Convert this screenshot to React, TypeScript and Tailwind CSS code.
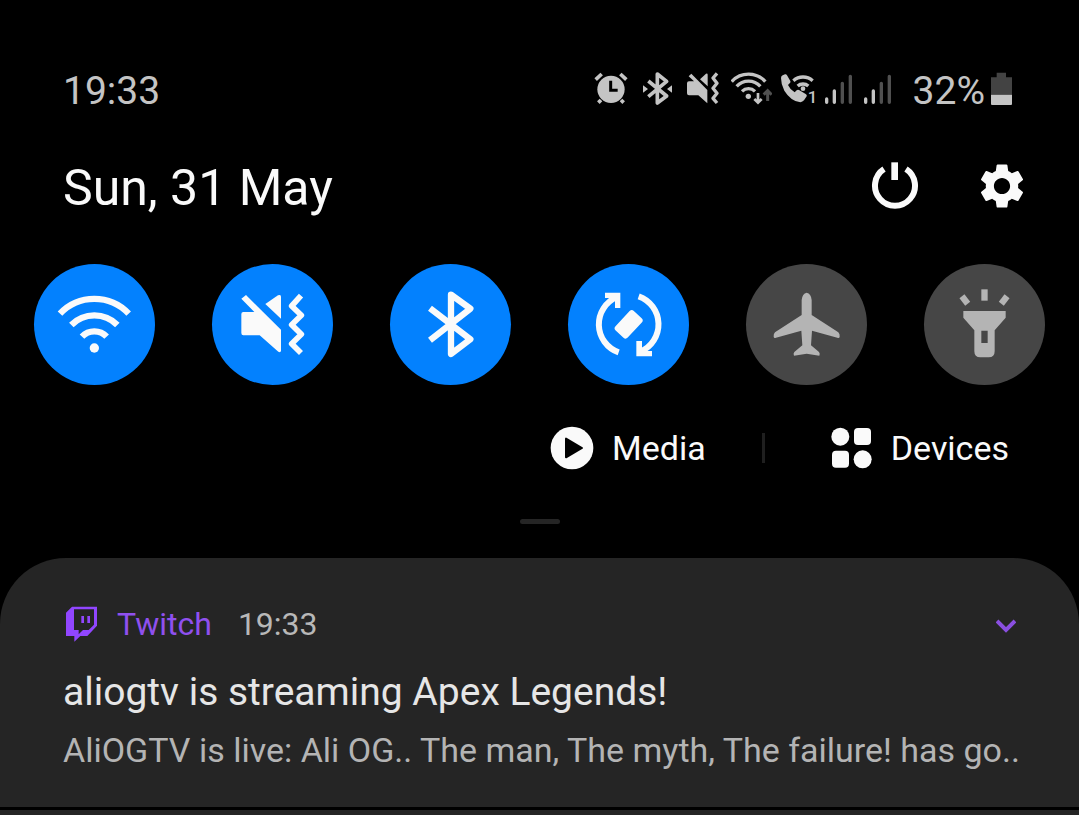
import type { ReactNode } from "react";
import { MdSettings } from "react-icons/md";

const tiles: { label: string; on: boolean; icon: ReactNode }[] = [
  {
    label: "Wi-Fi",
    on: true,
    icon: (
      <>
        <g fill="none" stroke="currentColor" strokeWidth="19">
          <path d="M78 149A142 142 0 0 1 284 149" />
          <path d="M112 183A97 97 0 0 1 250 183" />
          <path d="M144 218A51 51 0 0 1 218 218" />
        </g>
        <circle cx="181" cy="252" r="14" fill="currentColor" />
      </>
    ),
  },
  {
    label: "Vibrate",
    on: true,
    icon: (
      <>
        <g fill="currentColor">
          <path d="M88 104L102 93L207 197V260Q206 267 199 263L143 214H94Q88 214 88 207V150Q88 144 94 144H127Z" />
          <path d="M160 120L198 94Q207 90 207 98V164Z" />
        </g>
        <path
          d="M267 95L239 126L268 154L239 182L268 211L239 239L267 267"
          fill="none"
          stroke="currentColor"
          strokeWidth="17"
          strokeLinejoin="round"
        />
      </>
    ),
  },
  {
    label: "Bluetooth",
    on: true,
    icon: (
      <path
        d="M120 133L241 226L183 270V92L241 134L120 229"
        fill="none"
        stroke="currentColor"
        strokeWidth="19"
        strokeLinejoin="round"
      />
    ),
  },
  {
    label: "Auto rotate",
    on: true,
    icon: (
      <>
        <g fill="none" stroke="currentColor" strokeWidth="18">
          <path d="M152 265A89 89 0 0 1 147 99" />
          <path d="M212 97A89 89 0 0 1 217 263" />
        </g>
        <g fill="currentColor">
          <path d="M111 86H157V132H141V102H111Z" />
          <path d="M252 277H205V231H222V261H252Z" />
          <rect x="142" y="156" width="80" height="50" rx="9" transform="rotate(-47 182 181)" />
        </g>
      </>
    ),
  },
  {
    label: "Flight mode",
    on: false,
    icon: (
      <path
        fill="currentColor"
        d="M182 86Q195 88 197 108V153L277 205Q282 210 281 218Q280 224 274 221L198 200L195 244L219 264Q223 269 220 275L182 269L144 275Q141 269 145 264L169 244L166 200L90 221Q84 224 83 218Q82 210 87 205L167 153V108Q169 88 182 86Z"
      />
    ),
  },
  {
    label: "Torch",
    on: false,
    icon: (
      <g fill="currentColor">
        <rect x="172" y="76" width="19" height="34" />
        <rect x="113" y="94" width="19" height="28" transform="rotate(-38 122.5 108)" />
        <rect x="231" y="94" width="19" height="28" transform="rotate(38 240.5 108)" />
        <path
          fillRule="evenodd"
          d="M118 141H245V161L212 199V262Q212 280 194 280H169Q151 280 151 262V199L118 161ZM172 200V237H191V200Z"
        />
      </g>
    ),
  },
];

function Signal() {
  return (
    <svg className="h-9 w-7" viewBox="0 0 84 108" strokeWidth="10" strokeLinecap="round">
      <path d="M5 87V97M28 63V97" stroke="#c4c4c4" />
      <path d="M52 40V97M76 19V97" stroke="#505050" />
    </svg>
  );
}

function StatusIcons() {
  return (
    <div className="flex items-start text-[#c4c4c4]">
      <svg className="mr-[15px] h-9 w-[34px]" viewBox="0 0 102 108" stroke="currentColor" fill="none" strokeWidth="11">
        <circle cx="51" cy="58" r="41" fill="currentColor" stroke="none" />
        <path d="M5 29L23 12M79 12L97 29M21 90L13 98M81 90L89 98" />
        <path d="M50 32V61H71" stroke="#000" strokeWidth="9" />
      </svg>
      <svg className="mr-[15px] h-9 w-[29px]" viewBox="0 0 87 108">
        <path
          d="M16 33L71 78L43 99V12L71 34L16 80"
          fill="none"
          stroke="currentColor"
          strokeWidth="11"
          strokeLinejoin="round"
        />
        <path d="M0 46L15 57L0 68ZM87 46L72 57L87 68Z" fill="currentColor" />
      </svg>
      <svg className="mr-3 h-9 w-8" viewBox="0 0 96 108">
        <path
          d="M5 19L13 11L61 60V100L34 76H6Q0 76 0 70V40Q0 34 6 34H21ZM39 28L57 11Q62 9 62 14V49Z"
          fill="currentColor"
        />
        <path
          d="M90 10L78 24L90 40L78 55L90 70L78 85L90 99"
          fill="none"
          stroke="currentColor"
          strokeWidth="10"
          strokeLinejoin="round"
        />
      </svg>
      <svg className="mr-2 h-9 w-[41px]" viewBox="0 0 123 108" fill="none" stroke="currentColor" strokeWidth="10">
        <path d="M2 35A68 68 0 0 1 103 35M17 49A48 48 0 0 1 88 49M33 64A28 28 0 0 1 72 64" />
        <circle cx="52" cy="79" r="8" fill="currentColor" stroke="none" />
        <path d="M81 69V98M70 87L81 98L92 87" strokeWidth="8" />
        <path d="M110 93V64M98 74L110 62L122 74" stroke="#505050" strokeWidth="9" />
      </svg>
      <svg className="mr-[7px] h-9 w-[38px]" viewBox="0 0 114 108">
        <path
          d="M3 24Q3 18 8 16L15 13Q19 12 21 16L31 33Q33 37 29 40L24 45Q31 60 44 67L50 61Q53 58 57 60L77 72Q82 75 80 79L72 91Q66 98 58 96Q32 92 13 62Q3 44 3 24Z"
          fill="currentColor"
        />
        <path
          d="M40 32A44 44 0 0 1 98 32M53 48A24 24 0 0 1 85 48"
          fill="none"
          stroke="currentColor"
          strokeWidth="10"
        />
        <circle cx="69" cy="56" r="7" fill="currentColor" />
        <text x="83" y="98" fill="currentColor" className="text-[50px] font-medium">
          1
        </text>
      </svg>
      <Signal />
      <span className="w-[11px]" />
      <Signal />
      <span className="ml-[21px] text-[39px] leading-[42px]">32%</span>
      <svg className="ml-1.5 h-9 w-[21px]" viewBox="0 0 63 108">
        <path d="M17 8H45V22H63V74H0V22H17Z" fill="#434343" />
        <path d="M0 74H63V102Q63 105 60 105H3Q0 105 0 102Z" fill="currentColor" />
      </svg>
    </div>
  );
}

export default function App() {
  return (
    <main className="min-h-screen bg-black font-[Roboto,sans-serif] text-[#fafafa]">
      {/* STATUS BAR */}
      <header className="flex items-start justify-between pt-[70px] pr-[67px] pl-[63px]">
        <span className="text-[39px] leading-[42px] text-[#c4c4c4]">19:33</span>
        <StatusIcons />
      </header>

      {/* DATE */}
      <section className="mt-12 flex h-14 items-center justify-between pr-[50px] pl-[63px]">
        <h1 className="text-[50px] leading-14">Sun, 31 May</h1>
        <div className="mb-1 flex items-center gap-14">
          <button aria-label="Power">
            <svg className="size-12" viewBox="0 0 144 144">
              <path d="M39 21A60 60 0 1 0 105 21" fill="none" stroke="currentColor" strokeWidth="18" />
              <rect x="61" y="1" width="20" height="53" fill="currentColor" />
            </svg>
          </button>
          <button aria-label="Settings">
            <MdSettings className="size-[54px]" />
          </button>
        </div>
      </section>

      {/* QUICK TILES */}
      <section className="mt-12 flex justify-between px-[34px]">
        {tiles.map((tile) => (
          <button
            key={tile.label}
            aria-label={tile.label}
            aria-pressed={tile.on}
            className={`size-[121px] rounded-full ${tile.on ? "bg-[#0381fe] text-[#fafafa]" : "bg-[#464646] text-[#b4b4b4]"}`}
          >
            <svg viewBox="0 0 363 363">{tile.icon}</svg>
          </button>
        ))}
      </section>

      {/* MEDIA / DEVICES */}
      <section className="mt-10 flex items-center justify-end pr-[70px] text-[34px] leading-[46px]">
        <button className="flex items-center gap-[18px]">
          <svg className="size-11" viewBox="0 0 132 132">
            <circle cx="66" cy="66" r="64" fill="currentColor" />
            <path d="M48 38V94L96 66Z" stroke="#000" strokeWidth="6" strokeLinejoin="round" />
          </svg>
          Media
        </button>
        <span className="mr-[66px] ml-14 h-[30px] w-[3px] bg-[#1f1f1f]" />
        <button className="flex items-center gap-[18px]">
          <svg className="size-[42px]" viewBox="0 0 126 126" fill="currentColor">
            <circle cx="28" cy="29" r="27" />
            <rect x="69" y="3" width="51" height="51" rx="12" />
            <rect x="3" y="71" width="51" height="51" rx="12" />
            <circle cx="95" cy="97" r="27" />
          </svg>
          Devices
        </button>
      </section>

      <div className="mx-auto mt-12 h-[5px] w-10 rounded-full bg-[#252525]" />

      {/* NOTIFICATIONS */}
      <article className="mt-[34px] rounded-t-[66px] bg-[#252525] px-[63px] pt-[46px] pb-[35px]">
        <div className="flex h-10 items-center text-[32px] leading-10">
          <svg className="ml-[3px] h-9 w-[31px] text-[#9146ff]" viewBox="0 0 93 108" fill="currentColor">
            <path
              fillRule="evenodd"
              d="M0 20L18 2H93V59L64 90H43L25 107V90H0ZM24 10V72H38V85L51 72H68L84 56V10Z"
            />
            <path d="M46 30H54V51H46ZM64 30H72V51H64Z" />
          </svg>
          <span className="ml-5 text-[#9050ee]">Twitch</span>
          <time className="ml-[26px] text-[#b8b8b8]">19:33</time>
          <button aria-label="Expand" className="mt-1 ml-auto text-[#8a4fe0]">
            <svg className="h-4 w-5" viewBox="0 0 20 16" fill="none" stroke="currentColor" strokeWidth="4">
              <path d="M1 3L10 12L19 3" />
            </svg>
          </button>
        </div>
        <h2 className="mt-[26px] text-[39px] leading-11 text-[#e6e6e6]">aliogtv is streaming Apex Legends!</h2>
        <p className="mt-3.5 text-[34px] leading-11 whitespace-nowrap text-[#b4b4b4]">
          AliOGTV is live: Ali OG.. The man, The myth, The failure! has go..
        </p>
      </article>
      <article className="mt-[3px] h-[6px] bg-[#252525]" />
    </main>
  );
}
